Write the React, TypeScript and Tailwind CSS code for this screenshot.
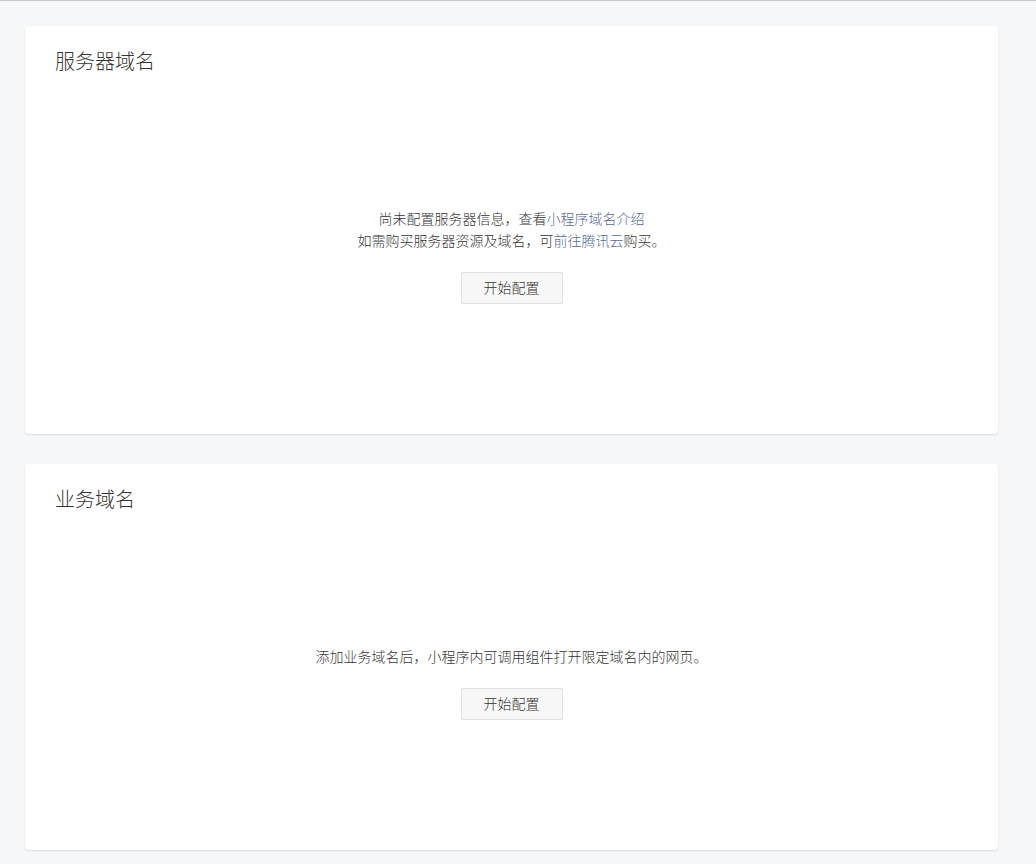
import React from "react";

function Card({ title, children }: { title: string; children: React.ReactNode }) {
  return (
    <div className="w-[973px] rounded-[4px] bg-white shadow-[0_1px_2px_rgba(0,0,0,0.12)] pt-[21px] pb-[130px]">
      <div className="pl-[30px] text-[20px] leading-[28px] font-light text-[#353535]">{title}</div>
      <div className="mt-[132px] flex flex-col items-center">
        <div className="text-center text-[14px] leading-[22px] font-light text-[#353535]">{children}</div>
        <button className="mt-[21px] h-[32px] w-[102px] rounded-[2px] border border-[#e2e2e2] bg-[#f7f7f7] pb-[3px] text-[14px] leading-[26px] font-light text-[#353535]">
          开始配置
        </button>
      </div>
    </div>
  );
}

export default function App() {
  return (
    <div
      className="min-h-[864px] bg-[#f6f7f9] border-t border-[#c9c9c9] pl-[25px] pt-[25px] pb-[14px] flex flex-col gap-[30px]"
      style={{ fontFamily: '"Noto Sans CJK SC", "Noto Sans", sans-serif' }}
    >
      <Card title="服务器域名">
        <div>
          尚未配置服务器信息，查看<span className="text-[#576b95]">小程序域名介绍</span>
        </div>
        <div>
          如需购买服务器资源及域名，可<span className="text-[#576b95]">前往腾讯云</span>购买。
        </div>
      </Card>
      <Card title="业务域名">
        <div>添加业务域名后，小程序内可调用组件打开限定域名内的网页。</div>
      </Card>
    </div>
  );
}
